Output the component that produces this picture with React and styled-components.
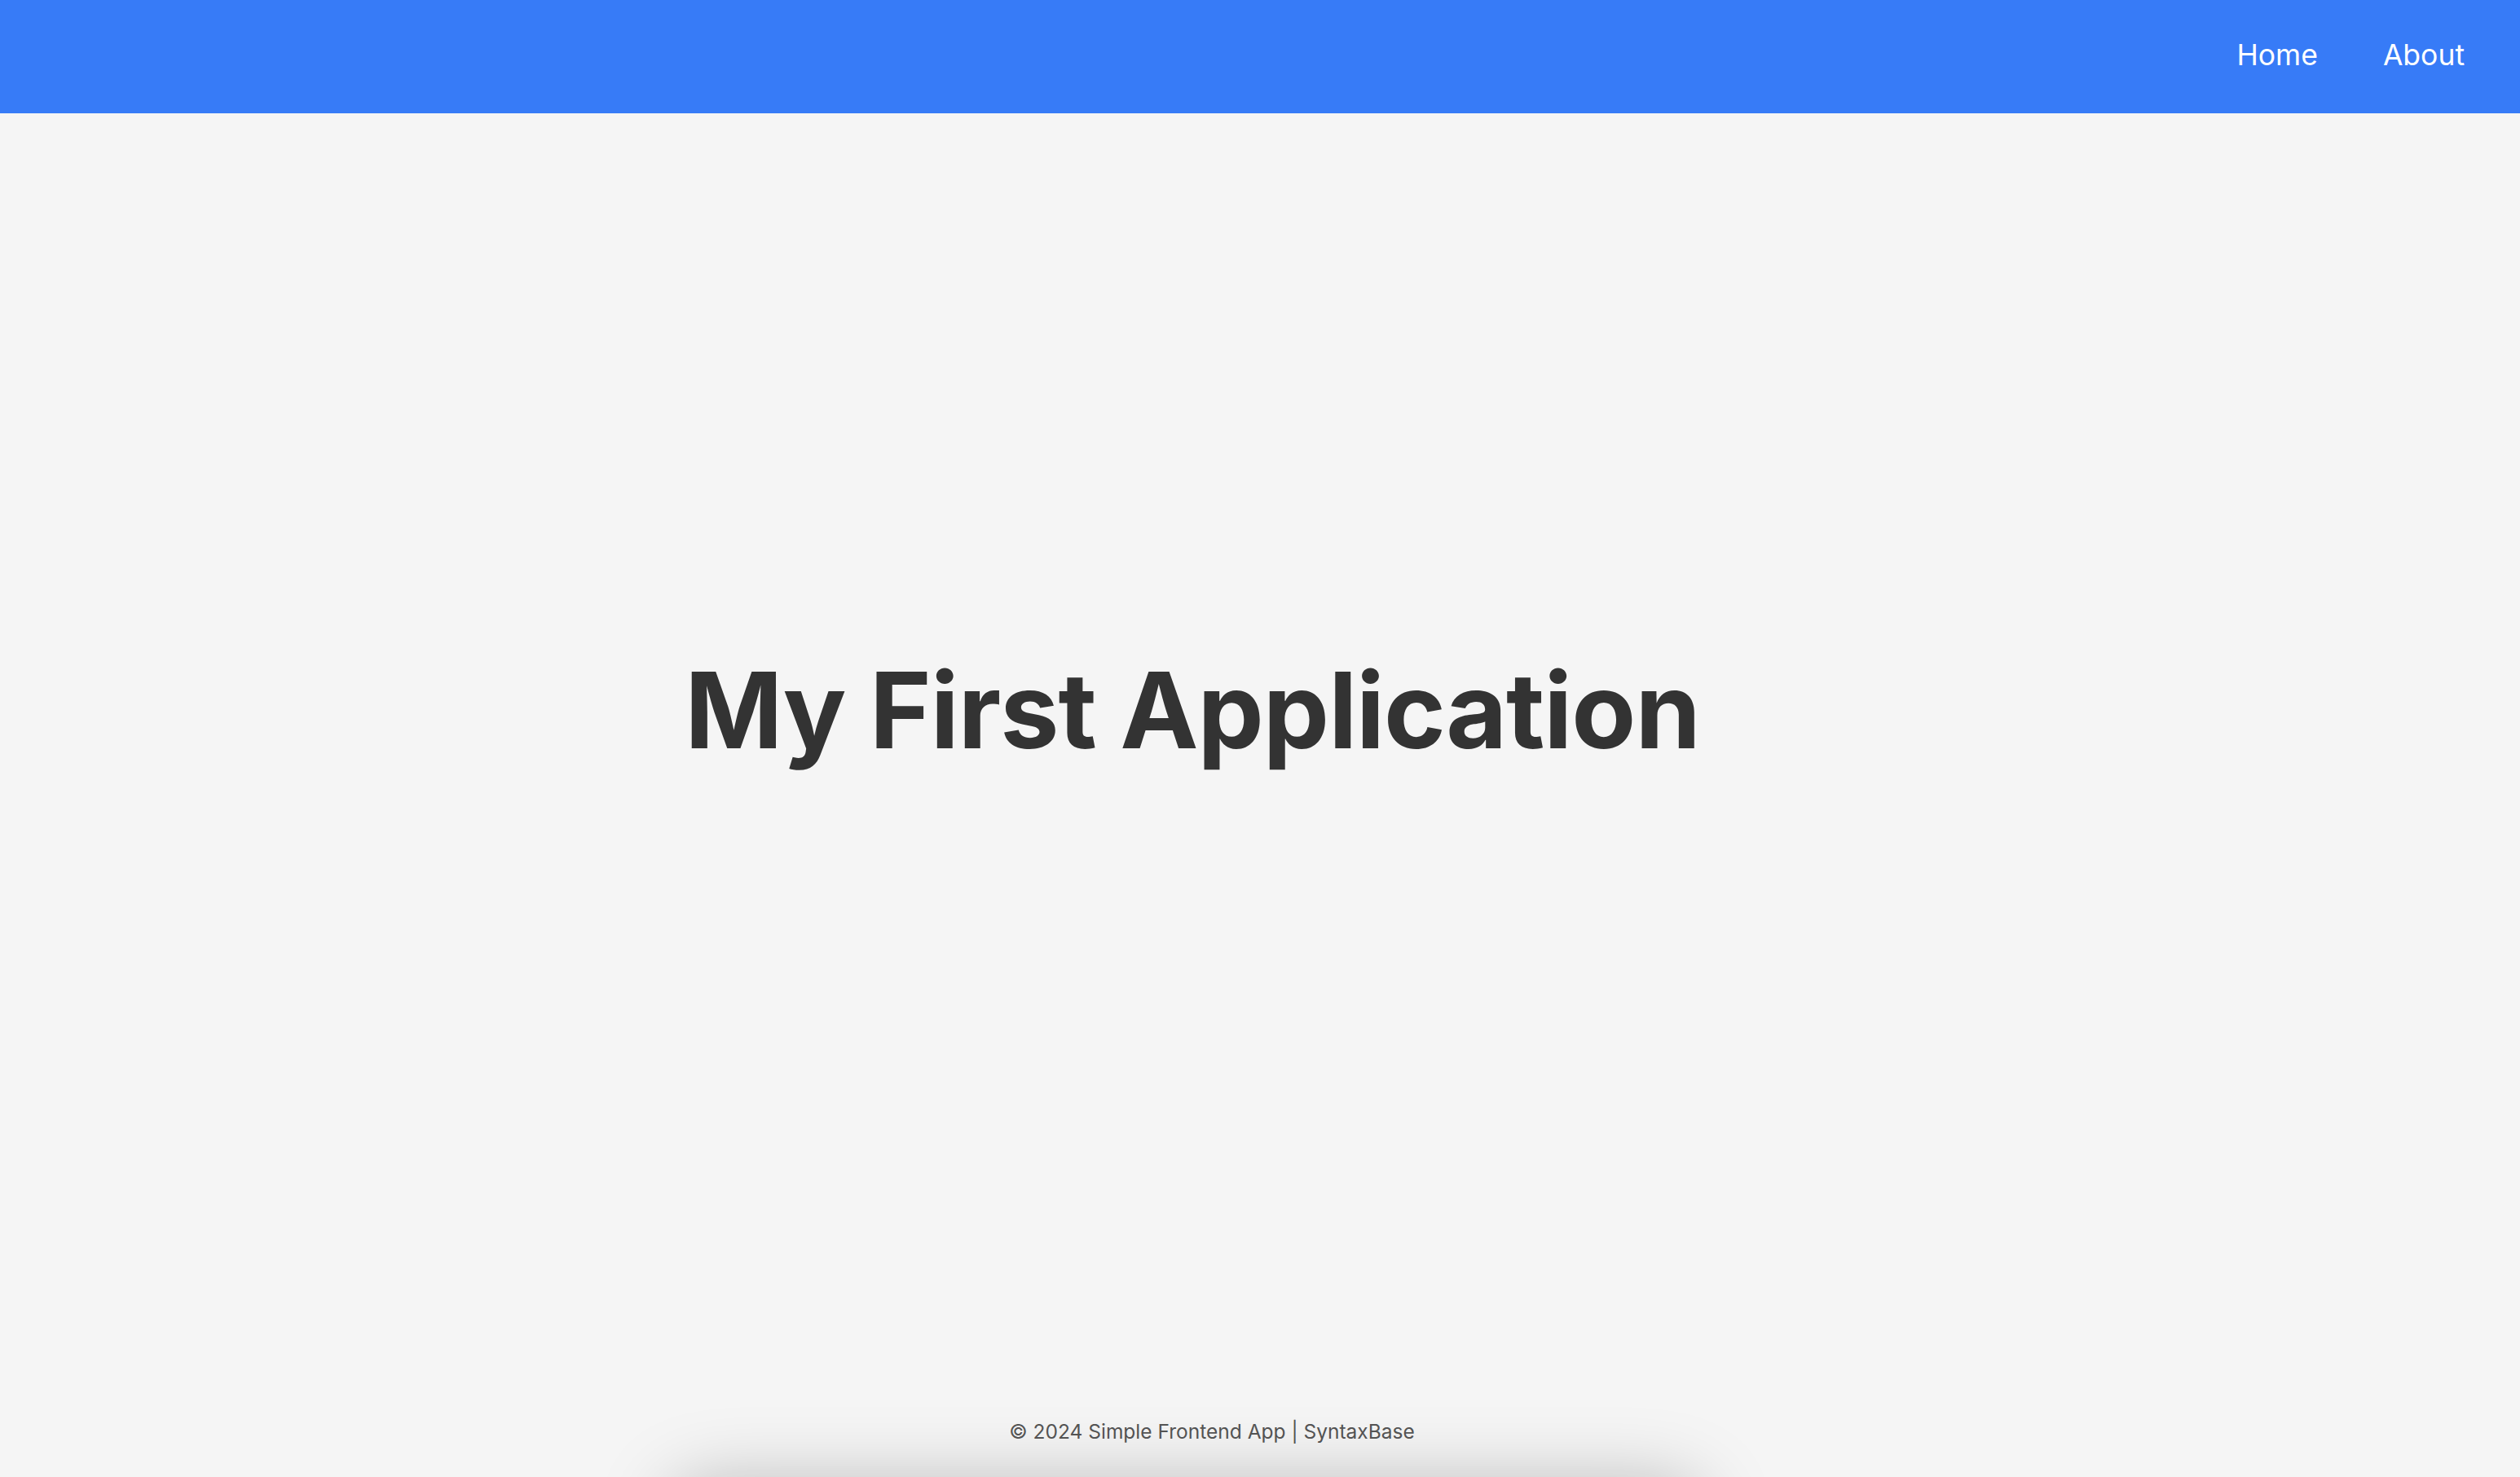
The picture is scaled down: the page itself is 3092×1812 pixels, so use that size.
import React from 'react';
import styled, { createGlobalStyle } from 'styled-components';

const GlobalStyle = createGlobalStyle`
    html, body {
        margin: 0;
        padding: 0;
        background: #f5f5f5;
        font-family: Inter, "Noto Sans", sans-serif;
    }
`;

const Page = styled.div`
    min-height: 100vh;
    display: flex;
    flex-direction: column;
    overflow: hidden;
    position: relative;
`;

const Header = styled.header`
    height: 139px;
    box-sizing: border-box;
    background: #377bf7;
    display: flex;
    justify-content: flex-end;
    align-items: center;
    gap: 80px;
    padding: 0 68px 4px;
`;

const NavLink = styled.a`
    color: #ffffff;
    font-size: 35.5px;
    text-decoration: none;
    cursor: pointer;
`;

const Main = styled.main`
    flex: 1;
    display: flex;
    align-items: center;
    justify-content: center;
    padding-right: 166px;
`;

const Title = styled.h1`
    margin: 0 0 98px;
    font-size: 129px;
    font-weight: 700;
    color: #333333;
    letter-spacing: -1px;
`;

const Footer = styled.footer`
    height: 112px;
    display: flex;
    align-items: center;
    justify-content: center;
    padding-right: 118px;
    color: #555555;
    font-size: 24.5px;
    position: relative;

    &::after {
        content: '';
        position: absolute;
        top: 120px;
        left: 820px;
        width: 1270px;
        height: 100px;
        border-radius: 50px;
        box-shadow: 0 0 90px rgba(0, 0, 0, 0.25);
    }
`;

const App = () => {
    return (
        <Page>
            <GlobalStyle />
            <Header>
                <NavLink>Home</NavLink>
                <NavLink>About</NavLink>
            </Header>
            <Main>
                <Title>My First Application</Title>
            </Main>
            <Footer>© 2024 Simple Frontend App | SyntaxBase</Footer>
        </Page>
    );
};

export default App;
